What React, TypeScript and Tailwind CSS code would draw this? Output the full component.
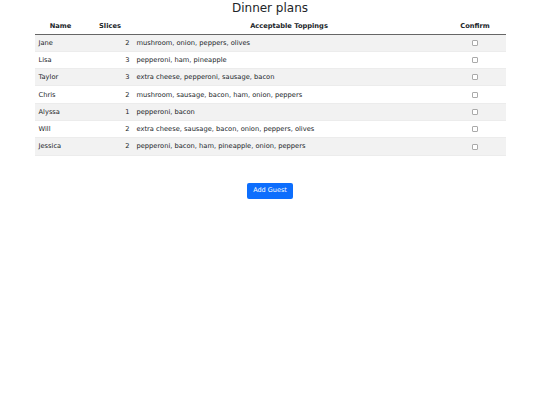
import React from "react";

const rows = [
  ["Jane", 2, "mushroom, onion, peppers, olives"],
  ["Lisa", 3, "pepperoni, ham, pineapple"],
  ["Taylor", 3, "extra cheese, pepperoni, sausage, bacon"],
  ["Chris", 2, "mushroom, sausage, bacon, ham, onion, peppers"],
  ["Alyssa", 1, "pepperoni, bacon"],
  ["Will", 2, "extra cheese, sausage, bacon, onion, peppers, olives"],
  ["Jessica", 2, "pepperoni, bacon, ham, pineapple, onion, peppers"],
] as const;

export default function App() {
  return (
    <div
      className="w-[540px] h-[405px] bg-white text-[#212529] flex flex-col items-center"
      style={{ fontFamily: '"DejaVu Sans", sans-serif' }}
    >
      <h1 className="text-[12px] leading-[14px] mt-[1px] mb-[3px]">Dinner plans</h1>
      <table className="w-[471px] border-collapse text-[6.7px] table-fixed">
        <colgroup>
          <col className="w-[52px]" />
          <col className="w-[47px]" />
          <col className="w-[311px]" />
          <col className="w-[61px]" />
        </colgroup>
        <thead>
          <tr className="h-[16px] border-b border-[#666]">
            <th className="font-bold text-center px-[4px]">Name</th>
            <th className="font-bold text-center px-[4px]">Slices</th>
            <th className="font-bold text-center px-[4px]">Acceptable Toppings</th>
            <th className="font-bold text-center px-[4px]">Confirm</th>
          </tr>
        </thead>
        <tbody>
          {rows.map((r, i) => (
            <tr
              key={r[0]}
              className={`h-[17.3px] border-b border-[#ececec] ${i % 2 === 0 ? "bg-[#f2f2f2]" : "bg-white"}`}
            >
              <td className="px-[4px] text-left">{r[0]}</td>
              <td className="px-[4px] text-right">{r[1]}</td>
              <td className="px-[3px] text-left">{r[2]}</td>
              <td className="px-[4px] text-center">
                <span className="inline-block w-[6px] h-[6px] border border-[#aaa] rounded-[1px] bg-white align-middle" />
              </td>
            </tr>
          ))}
        </tbody>
      </table>
      <button className="mt-[27px] w-[46px] h-[16px] rounded-[2px] bg-[#0d6efd] text-white text-[6.5px] leading-none">
        Add Guest
      </button>
    </div>
  );
}
